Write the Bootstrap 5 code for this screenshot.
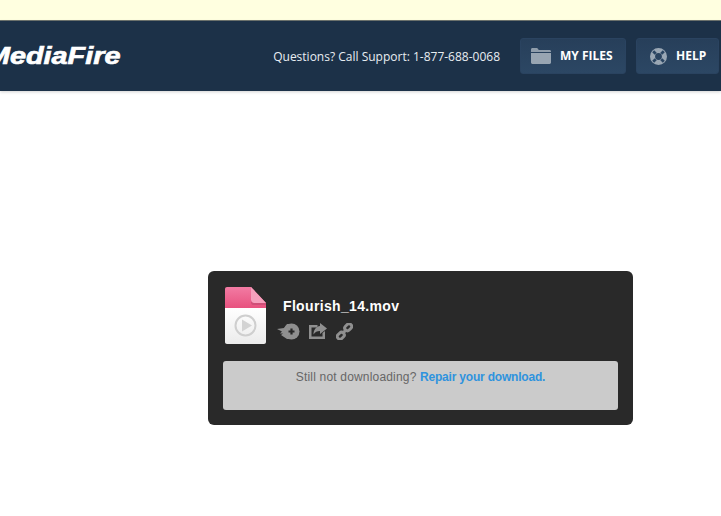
<!DOCTYPE html>
<html lang="en">
<head>
<meta charset="utf-8">
<title>MediaFire</title>
<link href="https://cdn.jsdelivr.net/npm/bootstrap@5.3.0/dist/css/bootstrap.min.css" rel="stylesheet">
<style>
html,body{height:516px;overflow:hidden;background:#fff}
body{font-family:"Liberation Sans",Arial,sans-serif}
.notice-strip{height:21px;background:#ffffe0;border-bottom:1px solid #6f7570}
.site-head{height:70px;background:#1c3148;box-shadow:0 1px 3px rgba(0,0,0,.18);padding-right:2px}
.brand-word{font:italic 700 24px/1 "Liberation Sans",Arial,sans-serif;color:#fff;margin-left:-14px;-webkit-text-stroke:.7px #fff;transform:scaleX(1.2);transform-origin:0 50%;width:110px;white-space:nowrap}
.support-line{font:400 12px/1 "Open Sans",sans-serif;color:#e8edf2;margin-right:20px;margin-top:2px}
.head-btn{height:36px;background:linear-gradient(#273f5a,#2c4764);border:1px solid #2a4360;border-radius:3px;color:#fff;font:700 12px/1 "Open Sans",sans-serif;padding:0;box-shadow:none}
.head-btn:hover{color:#fff}
.btn-files{width:106px;padding-left:10px;gap:9px;margin-right:10px}
.btn-help{width:83px;padding-left:13px;gap:9px}
.dl-panel{width:425px;height:154px;margin:180px 0 0 208px;background:#292929;border-radius:6px;padding:16px 15px 15px}
.file-thumb{width:44px;height:58px;flex:none;margin-left:2px}
.file-name{font:700 14px/1 "Liberation Sans",Arial,sans-serif;letter-spacing:.34px;color:#fff;margin:12px 0 9px 0}
.file-meta{margin-left:14px}
.tool-row{gap:9px;height:18px}
.rocket-icon{margin-left:-6px}
.repair-box{height:49px;margin-top:16px;background:#cbcbcb;border-radius:3px;padding-top:9px;font-size:12px;line-height:14px;color:#666;letter-spacing:.18px}
.repair-box a{color:#2f93de;font-weight:700;text-decoration:none;letter-spacing:-.2px}
</style>
</head>
<body>
<div class="notice-strip"></div>
<header class="site-head d-flex align-items-center">
  <div class="brand-word">MediaFire</div>
  <div class="ms-auto d-flex align-items-center">
    <span class="support-line">Questions? Call Support: 1-877-688-0068</span>
    <a class="btn head-btn btn-files d-flex align-items-center" href="#">
      <svg width="20" height="16" viewBox="0 0 20 16"><path d="M0 1.500C0 .7.600 0 1.400 0h4.800l1.600 2h10.800c.8 0 1.400.6 1.400 1.400V4H0z" fill="#8f9dab"/><path d="M0 5h20v9.600c0 .8-.6 1.400-1.400 1.400H1.400C.6 16 0 15.400 0 14.600z" fill="#98a5b2"/></svg>
      <span>MY FILES</span>
    </a>
    <a class="btn head-btn btn-help d-flex align-items-center" href="#">
      <svg width="17" height="17" viewBox="0 0 16 16"><circle cx="8" cy="8" r="5.600" fill="none" stroke="#9aa7b4" stroke-width="4.800"/><path d="M3 3l2.400 2.400M13 3l-2.400 2.400M3 13l2.400-2.400M13 13l-2.400-2.400" stroke="#2a4562" stroke-width="2.600"/></svg>
      <span>HELP</span>
    </a>
  </div>
</header>
<main class="dl-panel">
  <div class="d-flex">
    <svg class="file-thumb" viewBox="0 0 44 58">
      <defs>
        <linearGradient id="pk" x1="0" y1="0" x2="0" y2="1"><stop offset="0" stop-color="#f27ba3"/><stop offset="1" stop-color="#e8527f"/></linearGradient>
        <linearGradient id="wh" x1="0" y1="0" x2="0" y2="1"><stop offset="0" stop-color="#fff"/><stop offset="1" stop-color="#ebebeb"/></linearGradient>
      </defs>
      <path d="M2 0h24l15 16v5H0V2C0 .8.900 0 2 0z" fill="url(#pk)"/>
      <path d="M0 21h41v34c0 1.200-.9 2-2 2H2c-1.100 0-2-.8-2-2z" fill="url(#wh)"/>
      <path d="M26 0l15 16H29c-1.700 0-3-1.300-3-3z" fill="#f6a0bd"/>
      <path d="M26 13c0 1.700 1.300 3 3 3h12v2H28c-1.500 0-2-1.500-2-3z" fill="#cf4f78"/>
      <circle cx="20.500" cy="38.500" r="10" fill="none" stroke="#cfcfcf" stroke-width="2"/>
      <path d="M17 32.500v12l10-6z" fill="#d3d3d3"/>
    </svg>
    <div class="file-meta">
      <div class="file-name">Flourish_14.mov</div>
      <div class="tool-row d-flex align-items-center">
        <svg class="rocket-icon" width="23" height="17" viewBox="0 0 23 17"><path d="M0 6l7-1 3-4h3v15h-3l-3-2-3-2 2-1.500H3l2-2z" fill="#8f8f8f"/><circle cx="14.500" cy="8.500" r="8" fill="#8f8f8f"/><path d="M14.500 5.500v6M11.500 8.500h6" stroke="#292929" stroke-width="2.200"/></svg>
        <svg width="18" height="16" viewBox="0 0 18 16"><path d="M0 2h8.500v2.500H2.500v9h11V10l2.500-2v8H0z" fill="#8f8f8f"/><path d="M11 0l7 5.500-7 5.500V8C8 8 6 9 4.500 11.500 4.500 7 7 3.500 11 3z" fill="#8f8f8f"/></svg>
        <svg width="17" height="17" viewBox="0 0 16 16"><g fill="none" stroke="#8f8f8f" stroke-width="2.800"><rect x="8" y="1.500" width="7" height="5" rx="2.300" transform="rotate(-45 11.500 4)"/><rect x="1" y="9.500" width="7" height="5" rx="2.300" transform="rotate(-45 4.500 12)"/><path d="M6 10l4-4"/></g></svg>
      </div>
    </div>
  </div>
  <div class="repair-box text-center">Still not downloading? <a href="#">Repair your download.</a></div>
</main>
<script src="https://cdn.jsdelivr.net/npm/bootstrap@5.3.0/dist/js/bootstrap.bundle.min.js"></script>
</body>
</html>
